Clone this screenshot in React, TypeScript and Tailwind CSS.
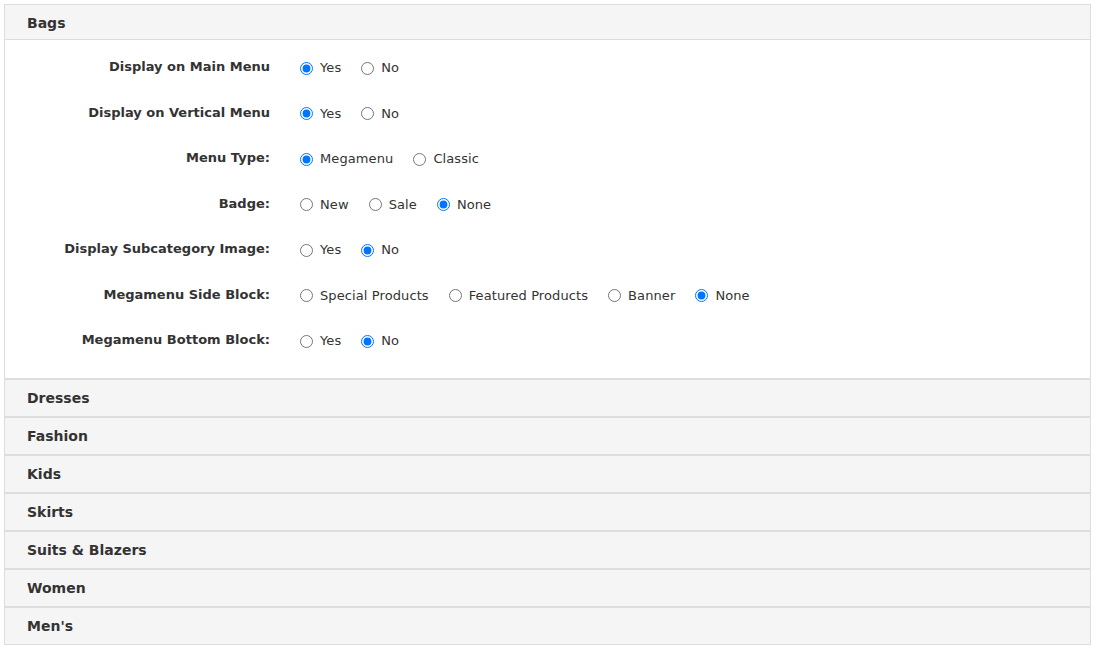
import React from 'react';

type Field = {
    label: string;
    name: string;
    options: string[];
    selected: string;
};

const fields: Field[] = [
    {label: "Display on Main Menu", name: "main", options: ["Yes", "No"], selected: "Yes"},
    {label: "Display on Vertical Menu", name: "vertical", options: ["Yes", "No"], selected: "Yes"},
    {label: "Menu Type:", name: "type", options: ["Megamenu", "Classic"], selected: "Megamenu"},
    {label: "Badge:", name: "badge", options: ["New", "Sale", "None"], selected: "None"},
    {label: "Display Subcategory Image:", name: "subimg", options: ["Yes", "No"], selected: "No"},
    {label: "Megamenu Side Block:", name: "side", options: ["Special Products", "Featured Products", "Banner", "None"], selected: "None"},
    {label: "Megamenu Bottom Block:", name: "bottom", options: ["Yes", "No"], selected: "No"},
];

const categories = ["Dresses", "Fashion", "Kids", "Skirts", "Suits & Blazers", "Women", "Men's"];

const App = () => {
    return (
        <div className="pt-[4px] pl-[4px] bg-white min-h-screen" style={{fontFamily: '"DejaVu Sans", Verdana, sans-serif'}}>
            <div className="w-[1087px]">
                <div className="border border-[#ddd]">
                    <div className="flex items-center h-[35px] pl-[22px] pt-[2px] bg-[#f5f5f5] border-b border-[#ddd] text-[14px] font-bold text-[#333]">
                        Bags
                    </div>
                    <div className="bg-white pt-[17px] pb-[26px] flex flex-col gap-[23.5px]">
                        {fields.map((f) => (
                            <div key={f.name} className="flex items-center h-[22px]">
                                <div className="w-[265px] shrink-0 text-right text-[13px] font-bold text-[#333] -mt-[2px]">
                                    {f.label}
                                </div>
                                <div className="flex items-center ml-[30px]">
                                    {f.options.map((o) => (
                                        <label key={o} className="flex items-center mr-[20px] text-[13px] text-[#333] tracking-[0.1px]">
                                            <input
                                                type="radio"
                                                name={f.name}
                                                defaultChecked={o === f.selected}
                                                className="m-0 w-[13px] h-[13px]"
                                            />
                                            <span className="ml-[7px]">{o}</span>
                                        </label>
                                    ))}
                                </div>
                            </div>
                        ))}
                    </div>
                </div>
                {categories.map((c) => (
                    <div key={c} className="border border-[#ddd]">
                        <div className="flex items-center h-[36px] pl-[22px] bg-[#f5f5f5] text-[14px] font-bold text-[#333]">
                            {c}
                        </div>
                    </div>
                ))}
            </div>
        </div>
    );
};

export default App;
